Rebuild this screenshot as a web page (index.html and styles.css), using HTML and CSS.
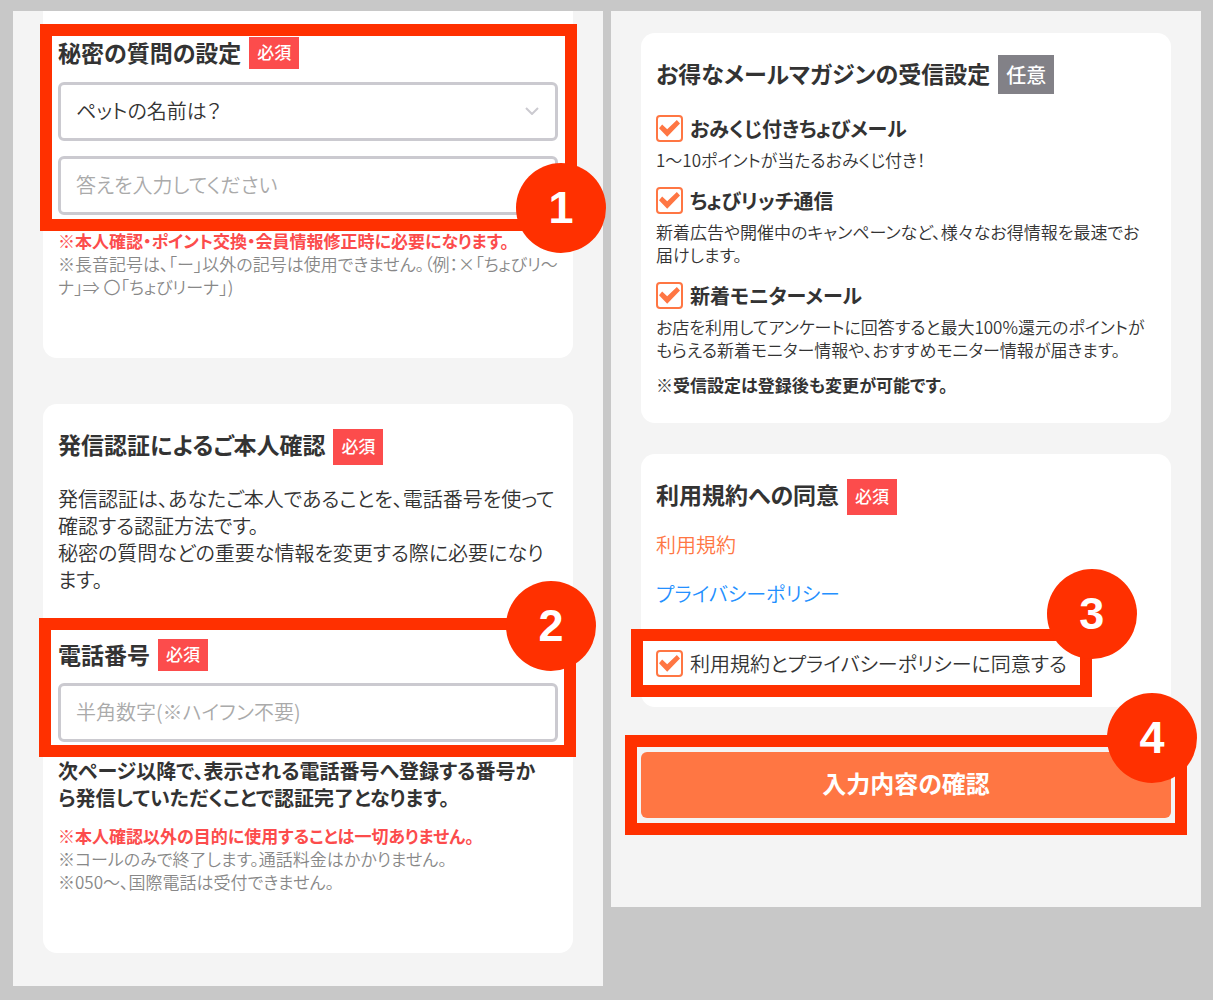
FILE: index.html
```html
<!DOCTYPE html>
<html lang="ja">
<head>
    <meta charset="UTF-8">
    <meta name="viewport" content="width=device-width, initial-scale=1.0">
    <title>会員情報の入力</title>
    <link rel="stylesheet" href="styles.css">
</head>
<body>
    <main class="screens">
        <section class="screen">
            <div class="card card-secret">
                <div class="step step-1">
                    <div class="card-title">
                        <h2><label for="question">秘密の質問の設定</label></h2>
                        <span class="tag">必須</span>
                    </div>
                    <div class="select-box">
                        <select id="question">
                            <option>ペットの名前は？</option>
                        </select>
                        <svg class="arrow" viewBox="0 0 14 8"><path d="M1 1l6 6 6-6"/></svg>
                    </div>
                    <input class="field" type="text" aria-label="答え" placeholder="答えを入力してください">
                    <span class="step-number">1</span>
                </div>
                <div class="notes">
                    <p class="alert">※本人確認・ポイント交換・会員情報修正時に必要になります。</p>
                    <p>※長音記号は、「ー」以外の記号は使用できません。（例：×「ちょびリ～<br>ナ」⇒ 〇「ちょびリーナ」)</p>
                </div>
            </div>

            <div class="card card-phone">
                <div class="card-title title-large">
                    <h2>発信認証によるご本人確認</h2>
                    <span class="tag">必須</span>
                </div>
                <p class="lead">発信認証は、あなたご本人であることを、電話番号を使って<br>確認する認証方法です。<br>秘密の質問などの重要な情報を変更する際に必要になり<br>ます。</p>
                <div class="step step-2">
                    <div class="card-title">
                        <h2><label for="phone">電話番号</label></h2>
                        <span class="tag">必須</span>
                    </div>
                    <input class="field" id="phone" type="tel" placeholder="半角数字(※ハイフン不要)">
                    <span class="step-number">2</span>
                </div>
                <p class="lead strong">次ページ以降で、表示される電話番号へ登録する番号か<br>ら発信していただくことで認証完了となります。</p>
                <div class="notes">
                    <p class="alert">※本人確認以外の目的に使用することは一切ありません。</p>
                    <p>※コールのみで終了します。通話料金はかかりません。</p>
                    <p>※050～、国際電話は受付できません。</p>
                </div>
            </div>
        </section>

        <section class="screen screen-right">
            <div class="card card-mail">
                <div class="card-title">
                    <h2>お得なメールマガジンの受信設定</h2>
                    <span class="tag tag-optional">任意</span>
                </div>
                <div class="mail-item">
                    <label class="check strong"><input type="checkbox" checked>おみくじ付きちょびメール</label>
                    <p>1～10ポイントが当たるおみくじ付き！</p>
                </div>
                <div class="mail-item">
                    <label class="check strong"><input type="checkbox" checked>ちょびリッチ通信</label>
                    <p>新着広告や開催中のキャンペーンなど、様々なお得情報を最速でお<br>届けします。</p>
                </div>
                <div class="mail-item">
                    <label class="check strong"><input type="checkbox" checked>新着モニターメール</label>
                    <p>お店を利用してアンケートに回答すると最大100%還元のポイントが<br>もらえる新着モニター情報や、おすすめモニター情報が届きます。</p>
                </div>
                <p class="mail-note">※受信設定は登録後も変更が可能です。</p>
            </div>

            <div class="card card-terms">
                <div class="card-title title-large">
                    <h2>利用規約への同意</h2>
                    <span class="tag">必須</span>
                </div>
                <a class="terms-link" href="#">利用規約</a>
                <a class="terms-link privacy" href="#">プライバシーポリシー</a>
                <div class="step step-3">
                    <label class="check"><input type="checkbox" checked>利用規約とプライバシーポリシーに同意する</label>
                    <span class="step-number">3</span>
                </div>
            </div>

            <div class="step step-4">
                <button class="submit-button" type="submit">入力内容の確認</button>
                <span class="step-number">4</span>
            </div>
        </section>
    </main>
</body>
</html>
```
FILE: styles.css
```css
* {
    box-sizing: border-box;
}

body {
    margin: 0;
    padding: 11px 12px 14px 13px;
    background-color: #c8c8c8;
    color: #333;
    font-family: "Noto Sans CJK JP", sans-serif;
    font-size: 20px;
    font-weight: 350;
    line-height: 27px;
    font-feature-settings: "palt";
}

h2, p {
    margin: 0;
}

input, select, button {
    font: inherit;
    font-feature-settings: inherit;
    color: inherit;
}

.screens {
    display: flex;
    align-items: flex-start;
    gap: 8px;
}

.screen {
    flex: 1;
    min-width: 0;
    padding: 0 30px 33px;
    background-color: #f4f4f4;
}

.screen-right {
    padding: 22px 30px 89px;
}

.card {
    padding: 25px 15px 60px;
    background-color: white;
    border-radius: 14px;
}

.card-secret {
    padding-top: 26px;
    border-radius: 0 0 14px 14px;
}

.card-phone {
    margin-top: 46px;
}

.card-mail {
    padding: 22px 15px 27px;
}

.card-terms {
    margin-top: 31px;
    padding-bottom: 30px;
}

/* Titles */
.card-title {
    display: flex;
    align-items: flex-start;
    gap: 8px;
}

.card-title h2 {
    font-size: 23px;
    font-weight: 700;
    line-height: 30px;
}

.card-mail h2 {
    line-height: 36px;
}

.tag {
    height: 32px;
    padding: 0 8px;
    background-color: #fc4c4c;
    color: white;
    font-size: 17px;
    font-weight: 500;
    line-height: 30px;
}

.title-large {
    margin-bottom: 20px;
}

.title-large .tag {
    height: 36px;
    line-height: 34px;
}

.tag-optional {
    height: 39px;
    background-color: #828187;
    font-size: 20px;
    line-height: 39px;
}

/* Form fields */
.field, .select-box select {
    display: block;
    width: 100%;
    height: 59px;
    padding: 0 15px 2px;
    background-color: white;
    border: 3px solid #cbcad0;
    border-radius: 6px;
}

.field::placeholder {
    color: #aaa;
    opacity: 1;
}

.select-box {
    position: relative;
    margin-bottom: 15px;
}

.select-box select {
    appearance: none;
}

.arrow {
    position: absolute;
    top: 25px;
    right: 19px;
    width: 14px;
    height: 8px;
    fill: none;
    stroke: #cbcad0;
    stroke-width: 2;
}

.lead {
    font-size: 20px;
}

.strong {
    font-weight: 700;
}

.notes {
    margin-top: 14px;
    color: #888;
    font-size: 17px;
    line-height: 23px;
}

.card-phone .notes {
    margin-top: 13px;
}

.notes .alert {
    color: #fc4c4c;
    font-weight: 700;
}

/* Checkboxes */
.check {
    display: flex;
    align-items: center;
    gap: 7px;
    line-height: 25px;
}

.check input {
    appearance: none;
    flex: none;
    width: 27px;
    height: 27px;
    margin: 0;
    border: 2px solid #ff7643;
    border-radius: 4px;
    display: grid;
    place-items: center;
}

.check input:checked::before {
    content: "";
    width: 21px;
    height: 17px;
    background-color: #ff7643;
    clip-path: polygon(0 48%, 15% 26%, 39% 54%, 85% 0, 100% 21%, 39% 98%);
}

.mail-item {
    margin-top: 16px;
}

.card-title + .mail-item {
    margin-top: 21px;
}

.mail-item p {
    margin-top: 6px;
    font-size: 17px;
    line-height: 23px;
}

.mail-note {
    margin-top: 12px;
    font-size: 17px;
    font-weight: 700;
    line-height: 23px;
}

.terms-link {
    display: block;
    width: fit-content;
    margin-top: 22px;
    color: #ff7643;
    text-decoration: none;
}

.card-terms .title-large {
    margin-bottom: 16px;
}

.title-large + .terms-link {
    margin-top: 0;
}

.privacy {
    color: #2490ff;
}

.submit-button {
    display: block;
    width: 100%;
    height: 66px;
    padding: 0 0 6px;
    background-color: #ff7643;
    color: white;
    border: none;
    border-radius: 6px;
    font-size: 24px;
    font-weight: 700;
}

/* Numbered steps: red frame with a circle on its edge */
.step {
    position: relative;
}

.step::after {
    content: "";
    position: absolute;
    inset: -13px -19px -16px -18px;
    border: 12px solid #ff3000;
    pointer-events: none;
}

.step-number {
    position: absolute;
    z-index: 1;
    width: 90px;
    height: 90px;
    border-radius: 50%;
    background-color: #ff3000;
    color: white;
    font-family: "Liberation Sans", sans-serif;
    font-size: 45px;
    font-weight: bold;
    line-height: 90px;
    text-align: center;
}

.step-1 .card-title {
    margin-bottom: 13px;
}

.step-1 .step-number {
    right: -48px;
    bottom: -38px;
}

.step-2 {
    margin: 46px 0 15px;
}

.step-2 .card-title {
    margin-bottom: 12px;
}

.step-2::after {
    inset: -21px -18px -15px -19px;
}

.step-2 .step-number {
    top: -58px;
    right: -38px;
}

.step-3 {
    width: fit-content;
    margin-top: 43px;
}

.step-3::after {
    inset: -21px -25px -20px;
}

.step-3 .step-number {
    top: -81px;
    right: -70px;
}

.step-4 {
    margin-top: 45px;
}

.step-4::after {
    inset: -17px -16px;
}

.step-4 .step-number {
    top: -59px;
    right: -26px;
}
```
